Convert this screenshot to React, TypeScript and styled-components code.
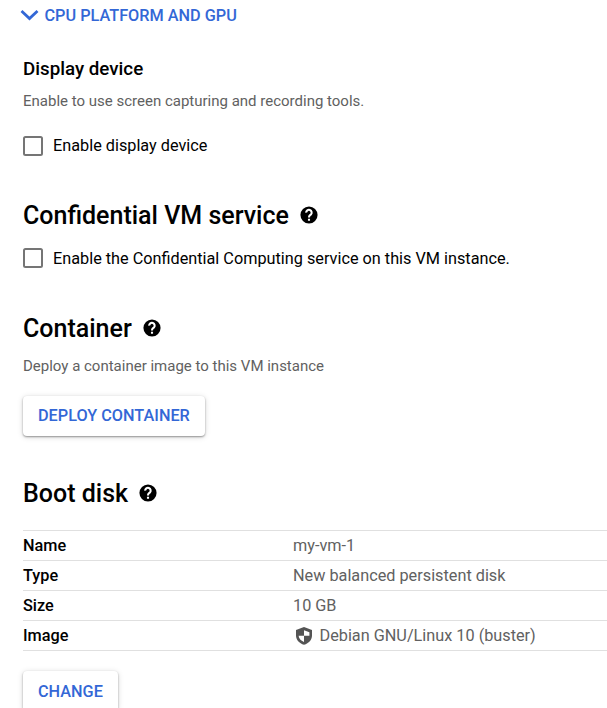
import React from 'react';
import styled, { createGlobalStyle } from 'styled-components';

const GlobalStyle = createGlobalStyle`
  * { box-sizing: border-box; }
  body {
    margin: 0;
    background: #fff;
    color: #000;
    font-family: Roboto, "Liberation Sans", sans-serif;
    overflow: hidden;
  }
`;

const Page = styled.main`
  width: 607px;
  height: 708px;
  overflow: hidden;
  padding-left: 23px;
  display: flex;
  flex-direction: column;
  align-items: flex-start;
`;

const Expander = styled.button`
  display: flex;
  align-items: center;
  height: 30px;
  flex-shrink: 0;
  margin: 1px 0 0 -3px;
  padding: 0;
  border: 0;
  background: none;
  color: #3367d6;
  font: 500 16.25px/20px Roboto, sans-serif;
  svg { margin-right: 5.5px; margin-bottom: 3px; }
`;

const Section = styled.section<{ $top: number }>`
  flex-shrink: 0;
  margin-top: ${(p) => p.$top}px;
  width: 100%;
`;

const SubHeading = styled.h3`
  margin: 0;
  font-size: 18.75px;
  line-height: 28px;
  font-weight: 500;
`;

const Heading = styled.h2`
  display: flex;
  align-items: center;
  margin: 0;
  font-size: 25px;
  line-height: 30px;
  font-weight: 500;
  svg { margin: 0 0 2px 10px; }
`;

const Hint = styled.p<{ $top: number }>`
  margin: ${(p) => p.$top}px 0 0;
  color: #616161;
  font-size: 15px;
  line-height: 20px;
`;

const CheckRow = styled.label<{ $top: number }>`
  display: flex;
  align-items: center;
  height: 20px;
  margin-top: ${(p) => p.$top}px;
  font-size: 16.25px;
  line-height: 20px;
`;

const CheckText = styled.span<{ $drop?: number }>`
  padding-top: ${(p) => (p.$drop ?? 0) * 2}px;
`;

const Box = styled.input`
  appearance: none;
  width: 20px;
  height: 20px;
  margin: 0 10px 0 0;
  border: 2px solid #757575;
  border-radius: 2.5px;
`;

const Raised = styled.button<{ $top: number; $drop?: number }>`
  display: block;
  height: 40px;
  margin-top: ${(p) => p.$top}px;
  padding: ${(p) => (p.$drop ?? 0) * 2}px 15px 0;
  border: 0;
  border-radius: 4px;
  background: #fff;
  color: #3367d6;
  font: 500 16.25px/38px Roboto, sans-serif;
  box-shadow: 0 1px 2px rgba(0, 0, 0, 0.38), 0 1px 6px rgba(0, 0, 0, 0.14);
`;

const Details = styled.dl`
  margin: 21px 0 0;
  border-top: 1px solid #e0e0e0;
`;

const DetailRow = styled.div`
  display: grid;
  grid-template-columns: 270px 1fr;
  height: 30px;
  border-bottom: 1px solid #e0e0e0;
  font-size: 16.25px;
  line-height: 29px;
`;

const Term = styled.dt`
  font-weight: 500;
`;

const Value = styled.dd`
  display: flex;
  align-items: center;
  margin: 0;
  color: #616161;
  svg { margin: 0 5.5px 0 1px; }
`;

const HelpIcon = () => (
  <svg width="20" height="20" viewBox="0 0 24 24" aria-hidden="true">
    <circle cx="12" cy="12" r="10.3" />
    <path
      d="M8.6 9.2a3.3 3.3 0 1 1 5.7 2.1l-1.2 1.1Q12 13.4 12 15M12 16.6v2.4"
      fill="none"
      stroke="#fff"
      strokeWidth="2.5"
    />
  </svg>
);

const ShieldIcon = () => (
  <svg width="20" height="20" viewBox="0 0 20 20" aria-hidden="true">
    <path fill="#545454" d="M10 1 18 4v5.5c0 4.3-3.1 7.8-8 9.3-4.9-1.5-8-5-8-9.3V4z" />
    <path fill="#fff" d="M10 4.2v5.6h5.4V6.2zM10 9.8H4.6c.3 2.9 2.2 4.9 5.4 6.2z" />
  </svg>
);

const details: { term: string; value: string; icon?: boolean }[] = [
  { term: 'Name', value: 'my-vm-1' },
  { term: 'Type', value: 'New balanced persistent disk' },
  { term: 'Size', value: '10 GB' },
  { term: 'Image', value: 'Debian GNU/Linux 10 (buster)', icon: true },
];

export default function App() {
  return (
    <>
      <GlobalStyle />
      <Page>
        <Expander>
          <svg width="19" height="12" viewBox="0 0 19 12" aria-hidden="true">
            <path d="M1.5 2 9.5 9.5 17.5 2" fill="none" stroke="#3367d6" strokeWidth="2.8" />
          </svg>
          CPU PLATFORM AND GPU
        </Expander>
        <Section $top={24}>
          <SubHeading>Display device</SubHeading>
          <Hint $top={8}>Enable to use screen capturing and recording tools.</Hint>
          <CheckRow $top={25}>
            <Box type="checkbox" />
            <CheckText>Enable display device</CheckText>
          </CheckRow>
        </Section>
        <Section $top={45}>
          <Heading>Confidential VM service<HelpIcon /></Heading>
          <CheckRow $top={17}>
            <Box type="checkbox" />
            <CheckText $drop={1}>
              Enable the Confidential Computing service on this VM instance.
            </CheckText>
          </CheckRow>
        </Section>
        <Section $top={46}>
          <Heading>Container<HelpIcon /></Heading>
          <Hint $top={12}>Deploy a container image to this VM instance</Hint>
          <Raised $top={20}>DEPLOY CONTAINER</Raised>
        </Section>
        <Section $top={43}>
          <Heading>Boot disk<HelpIcon /></Heading>
          <Details>
            {details.map((d) => (
              <DetailRow key={d.term}>
                <Term>{d.term}</Term>
                <Value>{d.icon && <ShieldIcon />}{d.value}</Value>
              </DetailRow>
            ))}
          </Details>
          <Raised $top={20} $drop={1}>CHANGE</Raised>
        </Section>
      </Page>
    </>
  );
}
